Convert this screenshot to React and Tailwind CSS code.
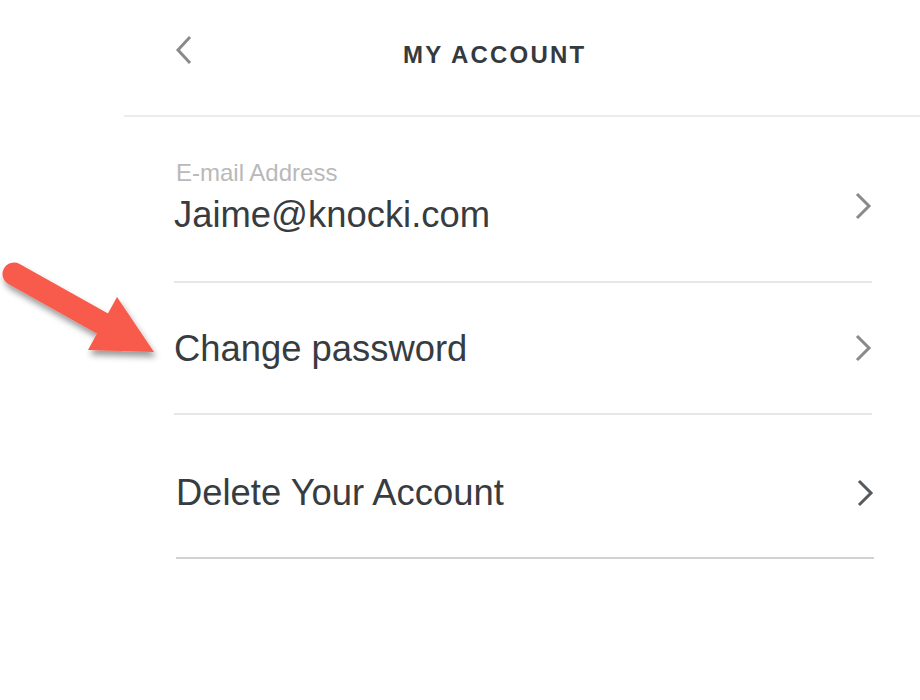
function BackChevron() {
  return (
    <svg width="20" height="30" viewBox="0 0 20 30" fill="none">
      <path d="M16 3 L5 15 L16 27" stroke="#8a8a8a" strokeWidth="3" strokeLinecap="square" />
    </svg>
  )
}

function RowChevron({ color }) {
  return (
    <svg width="20" height="28" viewBox="0 0 20 28" fill="none">
      <path d="M3 2 L15 14 L3 26" stroke={color} strokeWidth="3" />
    </svg>
  )
}

function Arrow() {
  return (
    <svg className="absolute left-0 top-0" width="200" height="380" viewBox="0 0 200 380">
      <defs>
        <filter id="shadow" x="-20%" y="-20%" width="140%" height="140%">
          <feDropShadow dx="2" dy="5" stdDeviation="3" floodColor="#000" floodOpacity="0.4" />
        </filter>
      </defs>
      <g filter="url(#shadow)" fill="#f85a4b">
        <line x1="14" y1="274" x2="114" y2="330" stroke="#f85a4b" strokeWidth="23" strokeLinecap="round" />
        <polygon points="117,297 154,352 88,350" />
      </g>
    </svg>
  )
}

export default function App() {
  return (
    <div className="relative w-[920px] h-[700px] overflow-hidden bg-white font-['Liberation_Sans',Arial,sans-serif] text-[#373c41]">
      <div className="ml-[124px]">
        <div className="flex h-[117px] items-start border-b-2 border-[#ececec]">
          <div className="w-[279px] pl-[49px] pt-[35px]">
            <BackChevron />
          </div>
          <h1 className="pt-[41px] text-[24px] leading-[28px] font-bold tracking-[2.2px] text-[#353a3f]">MY ACCOUNT</h1>
        </div>

        <div className="ml-[50px] w-[698px]">
          <div className="flex h-[166px] items-start justify-between border-b-2 border-[#e6e6e6]">
            <div className="pt-[42px]">
              <div className="pl-[2px] text-[24px] leading-[28px] text-[#b9b9b9]">E-mail Address</div>
              <div className="mt-[7px] text-[36.4px] leading-[42px]">Jaime@knocki.com</div>
            </div>
            <div className="pt-[75px] -mr-[2px]">
              <RowChevron color="#8a8a8a" />
            </div>
          </div>

          <div className="flex h-[132px] items-center justify-between border-b-2 border-[#e6e6e6]">
            <div className="pt-[2px] text-[36.4px] leading-[42px]">Change password</div>
            <div className="-mr-[2px]">
              <RowChevron color="#8a8a8a" />
            </div>
          </div>

          <div className="-mr-[2px] ml-[2px] flex h-[144px] items-center justify-between border-b-2 border-[#d2d2d2] pt-[14px]">
            <div className="text-[36.4px] leading-[42px]">Delete Your Account</div>
            <div className="-mr-[2px]">
              <RowChevron color="#555a5e" />
            </div>
          </div>
        </div>
      </div>
      <Arrow />
    </div>
  )
}
